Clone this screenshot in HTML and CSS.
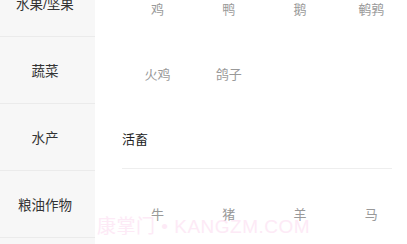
FILE: index.html
```html
<!DOCTYPE html>
<html lang="zh-CN">
<head>
  <meta charset="UTF-8" />
  <meta name="viewport" content="width=device-width, initial-scale=1.0" />
  <title>分类</title>
  <link rel="stylesheet" href="styles.css">
</head>
<body>
  <div class="page">
    <aside class="cats">
      <div class="cat">水果/坚果</div>
      <div class="cat">蔬菜</div>
      <div class="cat">水产</div>
      <div class="cat">粮油作物</div>
    </aside>

    <main class="list">
      <div class="grid first">
        <div class="item">鸡</div>
        <div class="item">鸭</div>
        <div class="item">鹅</div>
        <div class="item">鹌鹑</div>
        <div class="item">火鸡</div>
        <div class="item">鸽子</div>
      </div>

      <section class="group">
        <h3 class="group-title">活畜</h3>
        <div class="grid">
          <div class="item">牛</div>
          <div class="item">猪</div>
          <div class="item">羊</div>
          <div class="item">马</div>
        </div>
      </section>
    </main>

    <div class="watermark">康掌门 • KANGZM.COM</div>
  </div>
</body>
</html>
```

FILE: styles.css
```css
html, body {
  margin: 0;
  padding: 0;
  background: #fff;
}
body {
  font-family: "Liberation Sans", "Noto Sans CJK SC", sans-serif;
  font-size: 13px;
  color: #333;
  height: 244px;
  overflow: hidden;
}
.page {
  position: relative;
  display: flex;
  height: 244px;
  overflow: hidden;
}

/* left category column */
.cats {
  width: 95px;
  flex-shrink: 0;
  background: #f7f7f7;
  margin-top: -30px;
}
.cat {
  box-sizing: border-box;
  height: 67px;
  padding-right: 5px;
  display: flex;
  align-items: center;
  justify-content: center;
  border-bottom: 1px solid #ebebeb;
  font-size: 13.5px;
  color: #333;
}

/* right list */
.list {
  flex: 1;
  margin-top: -23px;
}
.grid {
  display: grid;
  grid-template-columns: repeat(4, 1fr);
  padding-left: 27px;
}
.grid .item {
  height: 65px;
  line-height: 65px;
  text-align: center;
  color: #999;
}
.group {
  margin-top: 5px;
}
.group-title {
  margin: 0 15px 0 27px;
  height: 56px;
  line-height: 56px;
  font-size: 13px;
  font-weight: normal;
  color: #222;
  border-bottom: 1px solid #eeeeee;
}
.group .grid {
  padding-top: 13px;
}

.watermark {
  position: absolute;
  left: 97px;
  top: 211px;
  font-size: 19px;
  letter-spacing: 0.5px;
  color: #fdeaf6;
  white-space: nowrap;
  pointer-events: none;
}
```
